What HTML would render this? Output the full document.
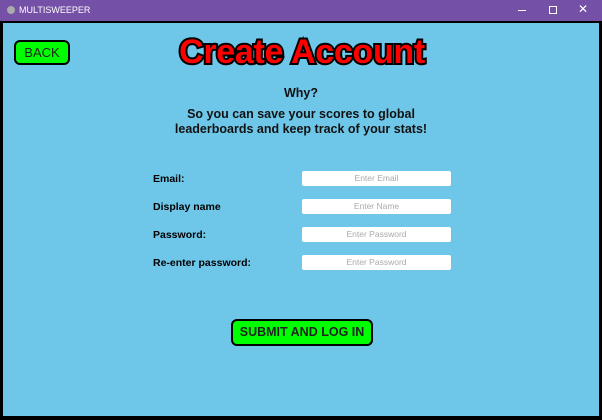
<!DOCTYPE html>
<html><head><style>
*{margin:0;padding:0;box-sizing:border-box}
body{width:602px;height:420px;overflow:hidden;font-family:"Liberation Sans",sans-serif;background:#000;position:relative}
.tb{position:absolute;left:0;top:0;width:602px;height:21px;background:#7450a6;color:#fff;font-size:9px}
.main{position:absolute;left:3px;top:23px;width:596px;height:393px;background:#6ec6e8}
.a{position:absolute}
.btn{position:absolute;background:#00ff00;border:2px solid #000;border-radius:6px;color:#222;text-align:center}
.lbl{position:absolute;left:153px;font-size:10.5px;font-weight:bold;color:#000}
.fld{position:absolute;left:302px;width:149px;height:15px;background:#fff;border-radius:2px;color:#aaa;font-size:8.5px;text-align:center;line-height:15px}
</style></head><body>
<div class="tb">
<div class="a" style="left:7px;top:6px;width:8px;height:8px;border-radius:50%;background:#aaa"></div>
<div class="a" style="left:19px;top:5px">MULTISWEEPER</div>
<div class="a" style="left:518px;top:10px;width:8px;height:1px;background:#fff"></div>
<div class="a" style="left:549px;top:6px;width:8px;height:8px;border:1px solid #fff"></div>
<div class="a" style="left:578px;top:2px;font-size:12px">✕</div>
</div>
<div class="main"></div>
<div class="btn" style="left:14px;top:40px;width:56px;height:25px;font-size:13px;line-height:21px">BACK</div>
<div class="a" style="left:0;width:604px;top:33px;text-align:center;font-size:34px;font-weight:bold;color:#f00;-webkit-text-stroke:4px #000;paint-order:stroke fill;letter-spacing:-0.3px">Create Account</div>
<div class="a" style="left:0;width:602px;top:86px;text-align:center;font-size:12.5px;font-weight:bold;color:#111">Why?</div>
<div class="a" style="left:0;width:602px;top:107px;text-align:center;font-size:12.5px;font-weight:bold;color:#111;line-height:15px">So you can save your scores to global<br>leaderboards and keep track of your stats!</div>
<div class="lbl" style="top:173px">Email:</div>
<div class="lbl" style="top:201px">Display name</div>
<div class="lbl" style="top:229px">Password:</div>
<div class="lbl" style="top:257px">Re-enter password:</div>
<div class="fld" style="top:171px">Enter Email</div>
<div class="fld" style="top:199px">Enter Name</div>
<div class="fld" style="top:227px">Enter Password</div>
<div class="fld" style="top:255px">Enter Password</div>
<div class="btn" style="left:231px;top:319px;width:142px;height:27px;font-size:12.5px;font-weight:bold;line-height:23px">SUBMIT AND LOG IN</div>
</body></html>
